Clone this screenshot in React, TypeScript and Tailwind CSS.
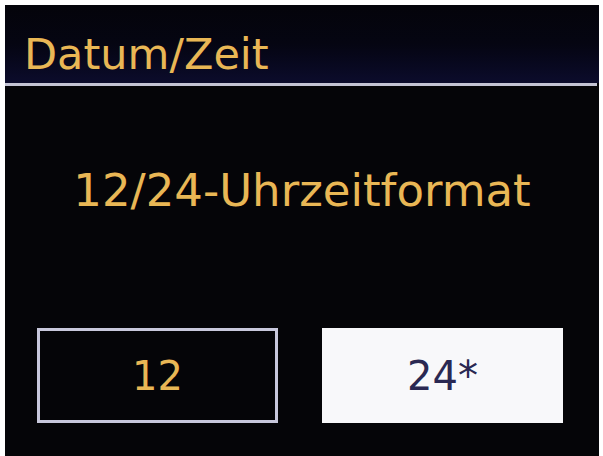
export default function App() {
  return (
    <div className="h-[456px] w-[603px] overflow-hidden bg-white pl-[5px] pr-[4px] pt-[5px] font-['DejaVu_Sans',sans-serif]">
      <div className="flex h-full flex-col bg-[#050508]">
        {/* Title bar */}
        <div className="h-[78px] bg-linear-to-b from-[#04040a] via-[#050512] to-[#0c0c2c] pl-[19px] pt-[28px]">
          <h1 className="text-[43px] leading-[43px] text-[#e9b755]">Datum/Zeit</h1>
        </div>
        <div className="mr-[2px] h-[3px] bg-[#c4c4d4]" />

        {/* Body */}
        <div className="flex flex-1 flex-col pt-[82px]">
          <p className="text-center text-[45px] leading-[45px] text-[#e9b755]">12/24-Uhrzeitformat</p>

          <div className="mt-[115px] flex gap-[44px] pl-[32px]">
            <div className="flex h-[95px] w-[241px] items-center justify-center border-[3px] border-[#c8c8dc] bg-[#050508]">
              <span className="text-[40px] leading-none text-[#e9b755]">12</span>
            </div>
            <div className="flex h-[95px] w-[241px] items-center justify-center bg-[#f8f8fa]">
              <span className="text-[40px] leading-none text-[#2a2852]">24*</span>
            </div>
          </div>
        </div>
      </div>
    </div>
  );
}
